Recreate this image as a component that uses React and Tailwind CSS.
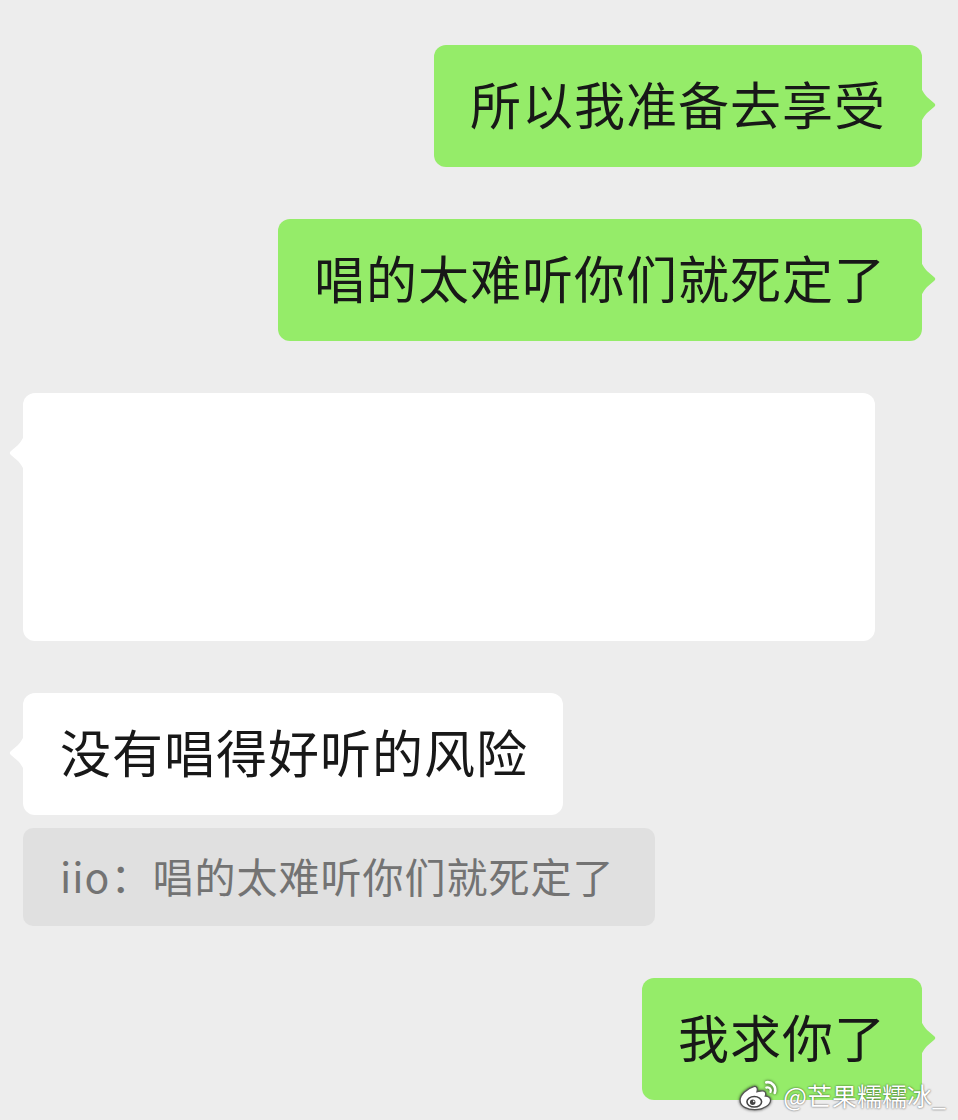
import React from "react";

const FONT = { fontFamily: '"Noto Sans CJK SC", "Noto Sans", sans-serif' };

function TailRight({ color }) {
  return (
    <svg className="absolute top-[43px] right-[-15px]" width="16" height="34" viewBox="0 0 16 34">
      <path d="M0 0 C2 4 4 7 6 9 L13 15 Q15.5 17 13 19 L6 25 C4 27 2 30 0 34 Z" fill={color} />
    </svg>
  );
}

function TailLeft({ color }) {
  return (
    <svg className="absolute top-[43px] left-[-15px]" width="16" height="34" viewBox="0 0 16 34">
      <path d="M16 0 C14 4 12 7 10 9 L3 15 Q0.5 17 3 19 L10 25 C12 27 14 30 16 34 Z" fill={color} />
    </svg>
  );
}

function GreenBubble({ text, className = "" }) {
  return (
    <div className={"flex justify-end pr-[36px] " + className}>
      <div className="relative bg-[#95ec69] rounded-[12px] h-[122px] pl-[36px] pr-[36px] pb-[6px] flex items-center">
        <span className="text-[51px] tracking-[1px] leading-none text-[#181818] whitespace-nowrap">{text}</span>
        <TailRight color="#95ec69" />
      </div>
    </div>
  );
}

function WeiboLogo() {
  return (
    <svg width="42" height="34" viewBox="0 0 40 32" className="[filter:drop-shadow(0_0_1.5px_rgba(0,0,0,0.7))]">
      <path d="M15 8 C8 10 2 16 2 21 C2 27 9 30 16 30 C25 30 31 25 31 21 C31 18 28 17 26 17 C27 14 26 12 23 12 C21 12 19 13 18 13 C19 10 18 7 15 8 Z" fill="#ffffff" stroke="#555" strokeWidth="1.2" />
      <ellipse cx="15.5" cy="22.5" rx="7" ry="5" fill="#ffffff" stroke="#444" strokeWidth="1.5" />
      <circle cx="14" cy="23" r="2.6" fill="#444" />
      <circle cx="15" cy="22" r="0.8" fill="#fff" />
      <path d="M27 4 C32 3 37 8 35 14" fill="none" stroke="#ffffff" strokeWidth="2.6" strokeLinecap="round" />
      <path d="M27 9 C30 8 32 11 31 13" fill="none" stroke="#ffffff" strokeWidth="2.2" strokeLinecap="round" />
    </svg>
  );
}

export default function App() {
  return (
    <div className="relative w-[958px] h-[1120px] bg-[#ededed] overflow-hidden flex flex-col pt-[45px]" style={FONT}>
      <GreenBubble text="所以我准备去享受" />
      <GreenBubble text="唱的太难听你们就死定了" className="mt-[52px]" />

      <div className="mt-[52px] pl-[23px] flex">
        <div className="relative bg-white rounded-[12px] w-[852px] h-[248px]">
          <TailLeft color="#ffffff" />
        </div>
      </div>

      <div className="mt-[52px] pl-[23px] flex">
        <div className="relative bg-white rounded-[12px] h-[122px] pl-[37px] pr-[35px] pb-[6px] flex items-center">
          <span className="text-[51px] tracking-[1px] leading-none text-[#181818] whitespace-nowrap">没有唱得好听的风险</span>
          <TailLeft color="#ffffff" />
        </div>
      </div>

      <div className="mt-[13px] pl-[23px] flex">
        <div className="bg-[#e0e0e0] rounded-[10px] h-[98px] w-[632px] pl-[37px] pb-[4px] flex items-center">
          <span className="text-[41px] tracking-[1px] leading-none text-[#737373] whitespace-nowrap">iio：唱的太难听你们就死定了</span>
        </div>
      </div>

      <GreenBubble text="我求你了" className="mt-[52px]" />

      <div className="absolute right-[12px] bottom-[8px] flex items-center gap-[3px]">
        <WeiboLogo />
        <span className="text-[25px] leading-none text-white [text-shadow:0_0_2px_rgba(0,0,0,0.75)] whitespace-nowrap">@芒果糯糯冰_</span>
      </div>
    </div>
  );
}
